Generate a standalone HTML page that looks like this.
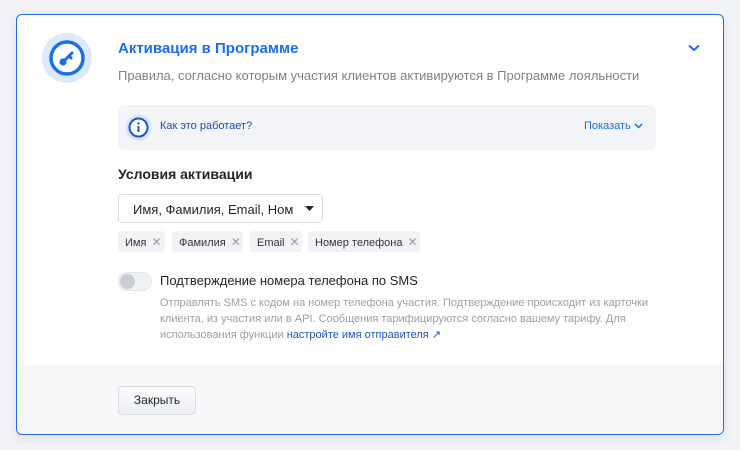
<!DOCTYPE html>
<html><head><meta charset="utf-8"><style>
*{box-sizing:border-box;margin:0;padding:0}
body{width:740px;height:450px;background:#f2f3f6;font-family:"Liberation Sans",sans-serif;position:relative;overflow:hidden}
.card{position:absolute;left:16px;top:14px;width:708px;height:421px;background:#fff;border:1px solid #1a6ee8;border-radius:6px;box-shadow:0 4px 12px rgba(0,0,0,.08);overflow:hidden}
.foot{position:absolute;left:0;right:0;bottom:0;height:69px;background:#f7f8fa}
.abs{position:absolute}
.title{left:101px;top:25px;font-size:15px;font-weight:bold;color:#1a6ee8}
.sub{left:101px;top:53px;font-size:13px;color:#7c818a}
.info{left:101px;top:90px;width:538px;height:45px;background:#f2f4f7;border-radius:7px}
.h{left:101px;top:151px;font-size:14px;font-weight:bold;color:#22262c}
.sel{left:101px;top:179px;width:205px;height:29px;border:1px solid #d8dbe0;border-radius:4px;font-size:13px;color:#22262c;padding:7px 0 0 14px;white-space:nowrap;overflow:hidden}
.tag{top:216px;height:21px;background:#f0f2f5;border-radius:3px;font-size:11px;color:#33373d;padding:4px 0 0 7px}
.tag b{font-weight:normal;color:#9aa0a8;margin-left:5px;font-size:12px}
.tog{left:101px;top:257px;width:34px;height:19px;border-radius:10px;background:#eef0f3;border:1px solid #e0e3e7}
.tog i{position:absolute;left:1px;top:1px;width:15px;height:15px;border-radius:50%;background:#c9ccd2}
.sms{left:143px;top:258px;font-size:13px;color:#22262c}
.desc{left:143px;top:280px;font-size:11px;line-height:16px;color:#9aa0a8;width:520px}
.btn{left:101px;top:371px;width:78px;height:29px;border:1px solid #d8dbe0;border-radius:4px;background:linear-gradient(#fafbfc,#eceef2);font-size:12px;color:#22262c;text-align:center;line-height:27px}
</style></head><body>
<div class="card">
<div class="foot"></div>
<svg class="abs" style="left:24px;top:17px" width="52" height="52" viewBox="0 0 52 52"><circle cx="26" cy="26" r="25" fill="#dbe9fd"/><circle cx="26" cy="26" r="16" fill="#fff" stroke="#1a6ee8" stroke-width="3.5"/><circle cx="22" cy="30" r="3.6" fill="#1a6ee8"/><path d="M23 29 L31 21 M28 24 l2 2" stroke="#1a6ee8" stroke-width="3" stroke-linecap="round"/></svg>
<div class="abs title">Активация в Программе</div>
<svg class="abs" style="left:671px;top:29px" width="12" height="8" viewBox="0 0 12 8"><path d="M1 1.5 L6 6 L11 1.5" stroke="#1a6ee8" stroke-width="2" fill="none"/></svg>
<div class="abs sub">Правила, согласно которым участия клиентов активируются в Программе лояльности</div>
<div class="abs info">
<svg class="abs" style="left:7px;top:9px" width="27" height="27" viewBox="0 0 27 27"><circle cx="13.5" cy="13.5" r="13" fill="#d6e5fb"/><circle cx="13.5" cy="13.5" r="9" fill="#fff" stroke="#1a56c8" stroke-width="2"/><rect x="12.5" y="12" width="2" height="6" fill="#1a56c8"/><circle cx="13.5" cy="9.5" r="1.2" fill="#1a56c8"/></svg>
<div class="abs" style="left:42px;top:15px;font-size:11px;color:#1a4fb0">Как это работает?</div>
<div class="abs" style="left:466px;top:15px;font-size:11px;color:#1a6ee8">Показать</div>
<svg class="abs" style="left:516px;top:18px" width="9" height="6" viewBox="0 0 9 6"><path d="M1 1 L4.5 4.5 L8 1" stroke="#1a6ee8" stroke-width="1.5" fill="none"/></svg>
</div>
<div class="abs h">Условия активации</div>
<div class="abs sel">Имя, Фамилия, Email, Номер</div>
<div class="abs" style="left:276px;top:180px;width:29px;height:27px;background:#fff"></div>
<svg class="abs" style="left:288px;top:191px" width="9" height="5"><path d="M0 0 H9 L4.5 5Z" fill="#22262c"/></svg>
<div class="abs tag" style="left:101px;width:47px">Имя<b>✕</b></div>
<div class="abs tag" style="left:155px;width:71px">Фамилия<b>✕</b></div>
<div class="abs tag" style="left:233px;width:52px">Email<b>✕</b></div>
<div class="abs tag" style="left:291px;width:112px">Номер телефона<b>✕</b></div>
<div class="abs tog"><i></i></div>
<div class="abs sms">Подтверждение номера телефона по SMS</div>
<div class="abs desc">Отправлять SMS с кодом на номер телефона участия. Подтверждение происходит из карточки клиента, из участия или в API. Сообщения тарифицируются согласно вашему тарифу. Для использования функции <span style="color:#1a56c8">настройте имя отправителя ↗</span></div>
<div class="abs btn">Закрыть</div>
</div>
</body></html>
